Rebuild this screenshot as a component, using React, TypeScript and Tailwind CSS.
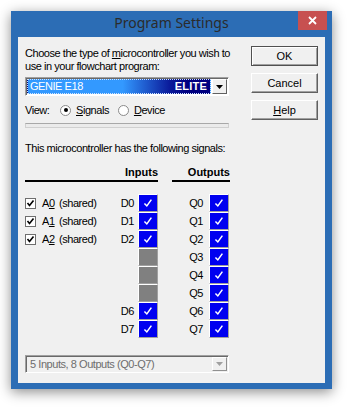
import React from "react";

const Check = ({ className = "" }: { className?: string }) => (
  <svg viewBox="0 0 20 18" className={className}>
    <path d="M6 9.5 L8.7 12.3 L13.8 5.2" fill="none" stroke="currentColor" strokeWidth="1.7" />
  </svg>
);

const Arrow = ({ color = "#000" }: { color?: string }) => (
  <svg width="7" height="4" viewBox="0 0 7 4">
    <path d="M0 0 H7 L3.5 4 Z" fill={color} />
  </svg>
);

// one signal cell: blue with a tick, or grey when unused
const Cell = ({ on }: { on: boolean }) => (
  <div className="h-[18px] w-[20px] border border-t-white border-l-white border-r-[#a0a0a0] border-b-[#a0a0a0]">
    {on ? (
      <div className="flex h-full w-full items-center justify-center bg-[#0000f0] text-white">
        <Check className="h-[16px] w-[18px]" />
      </div>
    ) : (
      <div className="h-full w-full bg-[#808080]" />
    )}
  </div>
);

const ClassicButton = ({ children, primary = false }: { children: React.ReactNode; primary?: boolean }) => (
  <button
    className={`h-[20px] w-[67px] bg-[#f0f0f0] text-center text-[11px] leading-none text-black ${
      primary
        ? "border border-[#505050] shadow-[inset_1px_1px_0_#fff,inset_-1px_-1px_0_#a0a0a0]"
        : "border border-t-white border-l-white border-r-[#606060] border-b-[#606060] shadow-[inset_-1px_-1px_0_#a0a0a0]"
    }`}>
    {children}
  </button>
);

type Row = { a?: string; d?: string; q: string };

const rows: Row[] = [
  { a: "0", d: "D0", q: "Q0" },
  { a: "1", d: "D1", q: "Q1" },
  { a: "2", d: "D2", q: "Q2" },
  { q: "Q3" },
  { q: "Q4" },
  { q: "Q5" },
  { d: "D6", q: "Q6" },
  { d: "D7", q: "Q7" },
];

export default function App() {
  return (
    <div className="h-[408px] w-[350px] overflow-hidden bg-white pl-[11px] pt-[11px] font-['Liberation_Sans',Arial,sans-serif] text-[11px] text-black">
      {/* Window frame */}
      <div className="flex h-[378px] w-[321px] flex-col bg-[#2c6db5] shadow-[0_3px_12px_rgba(0,0,0,0.45)]">
        {/* Title bar */}
        <div className="grid h-[26px] grid-cols-[1fr_auto_1fr]">
          <div />
          <span className="mt-[3px] font-['Noto_Sans',sans-serif] text-[14px] leading-[18px] text-[#2b2b2b]">
            Program Settings
          </span>
          <div className="mr-[5px] flex h-[19px] w-[29px] items-center justify-center justify-self-end bg-[#c75050]">
            <svg width="9" height="9" viewBox="0 0 9 9">
              <path d="M1 1 L8 8 M8 1 L1 8" stroke="#fff" strokeWidth="1.8" />
            </svg>
          </div>
        </div>

        {/* Client area */}
        <div className="mx-[7px] flex h-[346px] bg-[#f0f0f0] pl-[7px] tracking-[-0.45px]">
          <div className="flex w-[205px] flex-col">
            <p className="mt-[10px] leading-[13px]">
              Choose the type of <u>m</u>icrocontroller you wish to
              <br />
              use in your flowchart program:
            </p>

            {/* Microcontroller combo */}
            <div className="mt-[4px] flex h-[19px] w-[204px] border border-t-[#a0a0a0] border-l-[#a0a0a0] border-r-white border-b-white bg-white p-[1px] shadow-[inset_1px_1px_0_#696969]">
              <div className="flex flex-1 items-center justify-between border border-dotted border-[#cfe4ff] bg-[linear-gradient(to_right,#3399ff_0%,#3399ff_52%,#0a1a9a_78%,#000080_88%)] pl-[2px] pr-[3px] text-white">
                <span>GENIE E18</span>
                <span className="font-bold tracking-[0.2px]">ELITE</span>
              </div>
              <div className="ml-[1px] flex w-[15px] items-center justify-center border border-t-white border-l-white border-r-[#606060] border-b-[#606060] bg-[#f0f0f0]">
                <Arrow />
              </div>
            </div>

            {/* View radios */}
            <div className="mt-[6px] flex h-[16px] items-center">
              <span className="w-[35px]">View:</span>
              <span className="flex h-[11px] w-[11px] items-center justify-center rounded-full border border-[#8a8a8a] bg-white">
                <span className="h-[4px] w-[4px] rounded-full bg-black" />
              </span>
              <span className="ml-[5px]">
                <u>S</u>ignals
              </span>
              <span className="ml-[9px] h-[11px] w-[11px] rounded-full border border-[#8a8a8a] bg-white" />
              <span className="ml-[5px]">
                <u>D</u>evice
              </span>
            </div>

            <div className="mt-[5px] h-[5px] w-[204px] border border-[#d0d0d0] border-t-[#a8a8a8] bg-[#ebebeb]" />

            <p className="mt-[14px] leading-[13px]">This microcontroller has the following signals:</p>

            {/* Column headers */}
            <div className="mt-[11px] flex font-bold tracking-normal">
              <div className="w-[133px] border-b-2 border-black pb-[1px] text-right leading-[13px]">Inputs</div>
              <div className="ml-[14px] w-[58px] border-b-2 border-black pb-[1px] text-right leading-[13px]">Outputs</div>
            </div>

            {/* Signal rows */}
            <div className="mt-[12px] flex flex-col">
              {rows.map((r) => (
                <div key={r.q} className="flex h-[18px] items-center">
                  <div className="flex w-[113px] items-center pr-[4px]">
                    {r.a !== undefined ? (
                      <>
                        <span className="flex h-[11px] w-[11px] items-center justify-center border border-[#6e6e6e] bg-white text-black">
                          <svg width="9" height="9" viewBox="0 0 9 9">
                            <path d="M1.5 4 L3.5 6.5 L7.5 1.5" fill="none" stroke="#000" strokeWidth="1.6" />
                          </svg>
                        </span>
                        <span className="ml-[6px] w-[17px]">
                          A<u>{r.a}</u>
                        </span>
                        <span>(shared)</span>
                      </>
                    ) : null}
                    <span className="ml-auto">{r.d}</span>
                  </div>
                  <Cell on={r.d !== undefined} />
                  <span className="w-[51px] pr-[6px] text-right">{r.q}</span>
                  <Cell on />
                </div>
              ))}
            </div>

            {/* Disabled summary combo */}
            <div className="mt-[17px] flex h-[18px] w-[204px] border border-t-[#a0a0a0] border-l-[#a0a0a0] border-r-white border-b-white bg-[#f0f0f0] p-[1px] shadow-[inset_1px_1px_0_#696969]">
              <div className="flex flex-1 items-center pl-[3px] text-[#6d6d6d]">5 Inputs, 8 Outputs (Q0-Q7)</div>
              <div className="flex w-[15px] items-center justify-center border border-t-white border-l-white border-r-[#909090] border-b-[#909090] bg-[#f0f0f0]">
                <Arrow color="#a0a0a0" />
              </div>
            </div>
          </div>

          {/* Buttons */}
          <div className="ml-[21px] flex flex-col gap-[7px] pt-[9px] tracking-normal">
            <ClassicButton primary>OK</ClassicButton>
            <ClassicButton>Cancel</ClassicButton>
            <ClassicButton>
              <u>H</u>elp
            </ClassicButton>
          </div>
        </div>
      </div>
    </div>
  );
}
